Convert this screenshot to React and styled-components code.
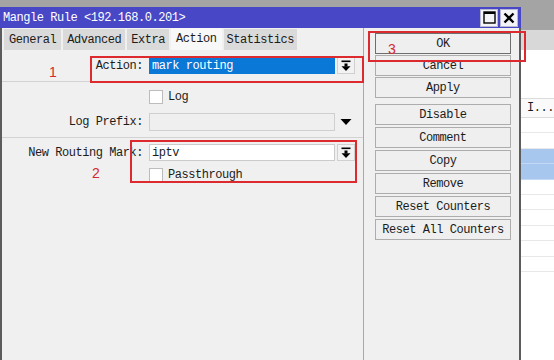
import React from "react";
import styled, { createGlobalStyle } from "styled-components";

const Global = createGlobalStyle`
  html, body { margin: 0; padding: 0; background: #a4a4a4; }
  * { box-sizing: border-box; }
`;

const Screen = styled.div`
  position: relative;
  display: flex;
  width: 554px;
  height: 360px;
  overflow: hidden;
  background: #a4a4a4;
  font-family: "Liberation Mono", "DejaVu Sans Mono", monospace;
  font-size: 12px;
  letter-spacing: -0.45px;
  color: #1c1c1c;
`;

const DialogColumn = styled.div`
  width: 521px;
  flex: none;
  padding-top: 7px;
  display: flex;
  flex-direction: column;
`;

const TitleBar = styled.div`
  height: 21px;
  flex: none;
  display: flex;
  align-items: center;
  padding: 0 3px 0 3px;
  background: #4848c6;
  color: #ffffff;
`;

const TitleText = styled.span`
  flex: 1;
  white-space: pre;
`;

const TitleButtons = styled.div`
  display: flex;
  gap: 2px;
`;

const TitleButton = styled.div`
  width: 18px;
  height: 18px;
  display: flex;
  align-items: center;
  justify-content: center;
  background: #f4f4f8;
  border: 1px solid #b8b8d0;
`;

const Body = styled.div`
  flex: 1;
  display: flex;
  border-left: 2px solid #5c5c5c;
  border-right: 2px solid #5c5c5c;
  background: #f0f0f0;
`;

const LeftPane = styled.div`
  width: 362px;
  flex: none;
  border-right: 1px solid #a9a9a9;
  display: flex;
  flex-direction: column;
`;

const TabsRow = styled.div`
  height: 22px;
  display: flex;
  align-items: flex-end;
  gap: 2px;
  padding-left: 2px;
`;

const Tab = styled.div`
  height: ${(p) => (p.$active ? "22px" : "21px")};
  display: flex;
  align-items: center;
  padding: 0 ${(p) => p.$pad || 4}px;
  background: ${(p) => (p.$active ? "#f8f8f8" : "#dadada")};
  white-space: pre;
`;

const Section = styled.div`
  display: flex;
  flex-direction: column;
  gap: ${(p) => p.$gap || 0}px;
  padding: ${(p) => p.$pt}px 0 ${(p) => p.$pb}px;
  border-bottom: ${(p) => (p.$line ? "1px solid #d2d2d2" : "none")};
`;

const Row = styled.div`
  display: flex;
  align-items: center;
  height: ${(p) => p.$h}px;
`;

const Label = styled.div`
  width: 147px;
  flex: none;
  padding-right: 6px;
  text-align: right;
  white-space: pre;
`;

const Field = styled.div`
  width: 186px;
  height: 100%;
  flex: none;
  display: flex;
  align-items: center;
  padding: 0 2px;
  white-space: pre;
  background: ${(p) =>
    p.$variant === "selected" ? "#0a78d6" : p.$variant === "disabled" ? "#efefef" : "#ffffff"};
  color: ${(p) => (p.$variant === "selected" ? "#ffffff" : "#1c1c1c")};
  border: 1px solid
    ${(p) => (p.$variant === "selected" ? "#0a78d6" : p.$variant === "disabled" ? "#cfcfcf" : "#cbcbcb")};
`;

const DropButton = styled.div`
  width: 18px;
  height: 100%;
  margin-left: 2px;
  display: flex;
  align-items: center;
  justify-content: center;
  background: ${(p) => (p.$plain ? "transparent" : "#f2f2f2")};
  border: 1px solid ${(p) => (p.$plain ? "transparent" : "#d0d0d0")};
`;

const CheckRow = styled.div`
  display: flex;
  align-items: center;
  gap: 5px;
  padding-left: 147px;
  height: 14px;
`;

const CheckBox = styled.div`
  width: 14px;
  height: 14px;
  background: #ffffff;
  border: 1px solid #bcbcbc;
`;

const RightPane = styled.div`
  flex: 1;
  display: flex;
  flex-direction: column;
  padding: 5px 0 0 11px;
`;

const ButtonGroup = styled.div`
  display: flex;
  flex-direction: column;
  gap: ${(p) => p.$gap}px;
  margin-top: ${(p) => p.$mt || 0}px;
`;

const Button = styled.div`
  width: 136px;
  height: 21px;
  display: flex;
  align-items: center;
  justify-content: center;
  background: #efefef;
  border: 1px solid ${(p) => (p.$default ? "#6e6e6e" : "#adadad")};
  white-space: pre;
`;

const BehindWindow = styled.div`
  flex: 1;
  display: flex;
  flex-direction: column;
`;

const BehindTitle = styled.div`
  height: 30px;
  background: #a4a4a4;
`;

const BehindToolbar = styled.div`
  height: 20px;
  background: #d8d8d8;
`;

const ListArea = styled.div`
  flex: 1;
  background: #ffffff;
  padding-top: 48px;
`;

const ListHeader = styled.div`
  height: 20px;
  display: flex;
  align-items: center;
  padding-left: 6px;
  border-top: 1px solid #dcdcdc;
  border-bottom: 1px solid #dcdcdc;
  background: #fafafa;
  white-space: pre;
`;

const ListRow = styled.div`
  height: 15.4px;
  border-bottom: 1px solid ${(p) => (p.$sel ? "#c2d8f4" : "#e8e8e8")};
  background: ${(p) => (p.$sel ? "#a8c7ef" : "#ffffff")};
`;

const Annot = styled.div`
  position: absolute;
  left: ${(p) => p.$x}px;
  top: ${(p) => p.$y}px;
  width: ${(p) => p.$w}px;
  height: ${(p) => p.$h}px;
  border: 2px solid #dc2a2e;
  pointer-events: none;
`;

const AnnotNum = styled.div`
  position: absolute;
  left: ${(p) => p.$x}px;
  top: ${(p) => p.$y}px;
  font-family: "Liberation Sans", "Noto Sans", sans-serif;
  font-size: 14px;
  line-height: 1;
  letter-spacing: 0;
  color: #d42a2e;
`;

const ArrowBar = () => (
  <svg width="12" height="12" viewBox="0 0 12 12">
    <rect x="1.5" y="0.5" width="9" height="1.6" fill="#000" />
    <rect x="4.5" y="3.5" width="3" height="3" fill="#000" />
    <polygon points="1.5,6.2 10.5,6.2 6,11" fill="#000" />
  </svg>
);

const ArrowPlain = () => (
  <svg width="12" height="8" viewBox="0 0 12 8">
    <polygon points="0.5,1 11.5,1 6,7" fill="#000" />
  </svg>
);

const MaxIcon = () => (
  <svg width="13" height="13" viewBox="0 0 13 13">
    <rect x="1" y="1" width="11" height="11" fill="none" stroke="#000" strokeWidth="1.4" />
    <rect x="1" y="1" width="11" height="2" fill="#000" />
  </svg>
);

const CloseIcon = () => (
  <svg width="12" height="12" viewBox="0 0 12 12">
    <path d="M1.5 1.5 L10.5 10.5 M10.5 1.5 L1.5 10.5" stroke="#000" strokeWidth="2.4" />
  </svg>
);

export default function App() {
  const tabs = [
    { name: "General", pad: 5 },
    { name: "Advanced", pad: 4 },
    { name: "Extra", pad: 4 },
    { name: "Action", pad: 5, active: true },
    { name: "Statistics", pad: 3 },
  ];
  const rows = [0, 0, 1, 1, 0, 0, 0, 0, 0, 0];
  return (
    <>
      <Global />
      <Screen>
        <DialogColumn>
          <TitleBar>
            <TitleText>Mangle Rule &lt;192.168.0.201&gt;</TitleText>
            <TitleButtons>
              <TitleButton>
                <MaxIcon />
              </TitleButton>
              <TitleButton>
                <CloseIcon />
              </TitleButton>
            </TitleButtons>
          </TitleBar>
          <Body>
            <LeftPane>
              <TabsRow>
                {tabs.map((t) => (
                  <Tab key={t.name} $active={t.active} $pad={t.pad}>
                    {t.name}
                  </Tab>
                ))}
              </TabsRow>
              <Section $pt={7} $pb={7} $line>
                <Row $h={17}>
                  <Label>Action:</Label>
                  <Field $variant="selected">mark routing</Field>
                  <DropButton>
                    <ArrowBar />
                  </DropButton>
                </Row>
              </Section>
              <Section $pt={8} $pb={6} $gap={9} $line>
                <CheckRow>
                  <CheckBox />
                  <span>Log</span>
                </CheckRow>
                <Row $h={18}>
                  <Label>Log Prefix:</Label>
                  <Field $variant="disabled" />
                  <DropButton $plain>
                    <ArrowPlain />
                  </DropButton>
                </Row>
              </Section>
              <Section $pt={6} $pb={0} $gap={7}>
                <Row $h={17}>
                  <Label>New Routing Mark:</Label>
                  <Field>iptv</Field>
                  <DropButton>
                    <ArrowBar />
                  </DropButton>
                </Row>
                <CheckRow>
                  <CheckBox />
                  <span>Passthrough</span>
                </CheckRow>
              </Section>
            </LeftPane>
            <RightPane>
              <ButtonGroup $gap={1}>
                <Button $default>OK</Button>
                <Button>Cancel</Button>
                <Button>Apply</Button>
              </ButtonGroup>
              <ButtonGroup $gap={2} $mt={6}>
                <Button>Disable</Button>
                <Button>Comment</Button>
                <Button>Copy</Button>
                <Button>Remove</Button>
                <Button>Reset Counters</Button>
                <Button>Reset All Counters</Button>
              </ButtonGroup>
            </RightPane>
          </Body>
        </DialogColumn>
        <BehindWindow>
          <BehindTitle />
          <BehindToolbar />
          <ListArea>
            <ListHeader>I...</ListHeader>
            {rows.map((s, i) => (
              <ListRow key={i} $sel={!!s} />
            ))}
          </ListArea>
        </BehindWindow>

        <Annot $x={90} $y={56} $w={274} $h={27} />
        <AnnotNum $x={49} $y={65}>1</AnnotNum>
        <Annot $x={130} $y={140} $w={227} $h={43} />
        <AnnotNum $x={92} $y={166}>2</AnnotNum>
        <Annot $x={368} $y={31} $w={158} $h={31} />
        <AnnotNum $x={388} $y={42}>3</AnnotNum>
      </Screen>
    </>
  );
}
